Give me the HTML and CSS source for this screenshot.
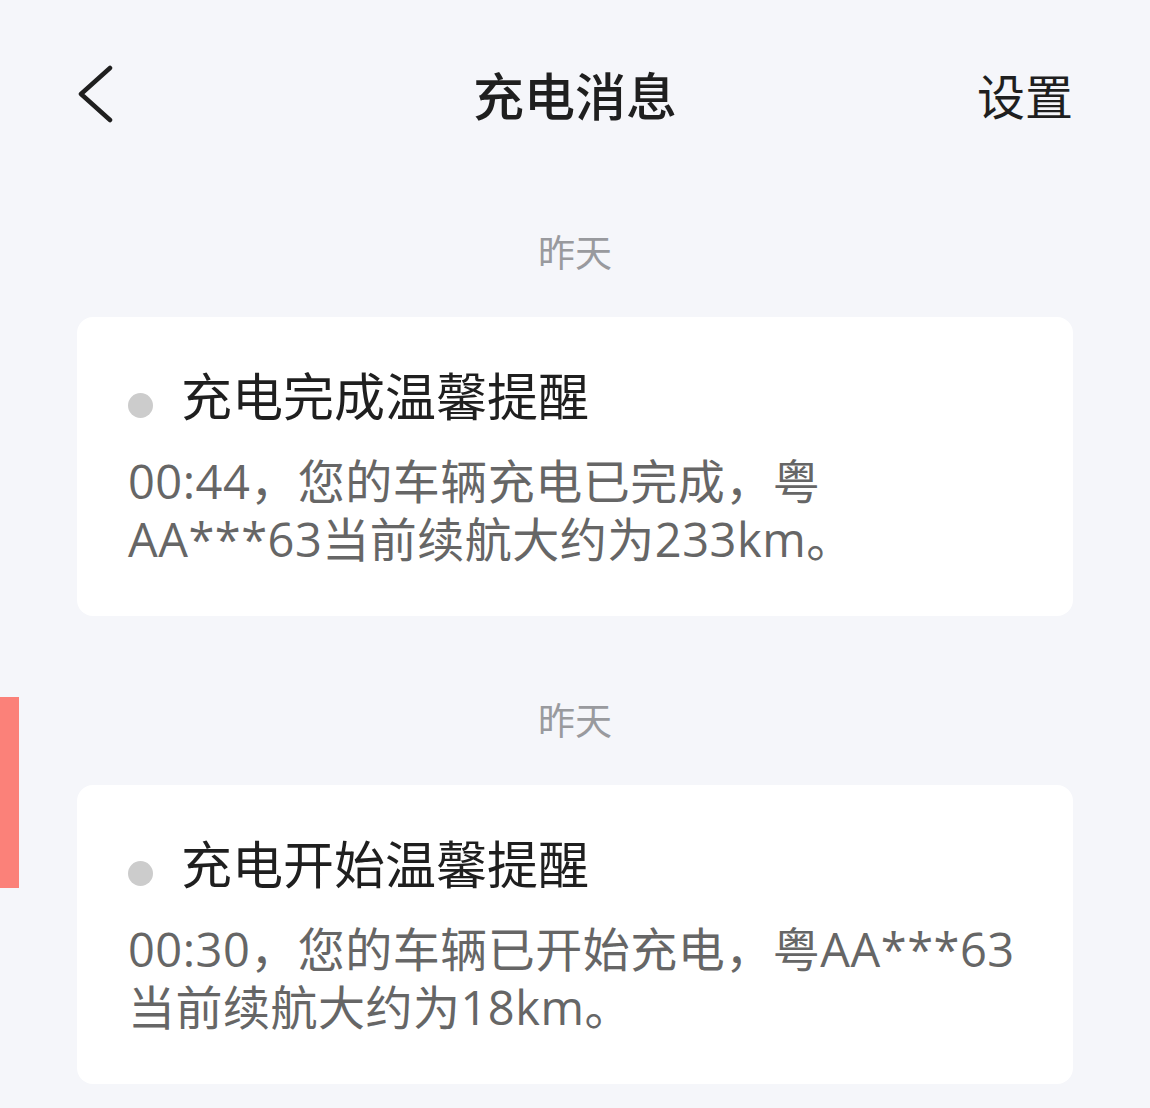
FILE: index.html
```html
<!DOCTYPE html>
<html lang="zh-CN">
<head>
<meta charset="utf-8">
<title>充电消息</title>
<link rel="stylesheet" href="styles.css">
</head>
<body>
<div class="page">
  <header class="topbar">
    <button class="back" aria-label="返回">
      <svg width="40" height="58" viewBox="0 0 40 58"><polyline points="34,3 5,29 34,55" fill="none" stroke="#1f1f1f" stroke-width="4.5" stroke-linecap="round" stroke-linejoin="round"/></svg>
    </button>
    <h1 class="title">充电消息</h1>
    <span class="settings">设置</span>
  </header>
  <main class="list">
    <section class="group">
      <div class="date">昨天</div>
      <article class="card">
        <div class="card-head"><span class="dot"></span><h2 class="card-title">充电完成温馨提醒</h2></div>
        <p class="card-body">00:44，您的车辆充电已完成，粤<br>AA***63当前续航大约为233km。</p>
      </article>
    </section>
    <section class="group">
      <div class="date">昨天</div>
      <article class="card">
        <div class="card-head"><span class="dot"></span><h2 class="card-title">充电开始温馨提醒</h2></div>
        <p class="card-body">00:30，您的车辆已开始充电，粤AA***63当前续航大约为18km。</p>
      </article>
    </section>
  </main>
  <div class="edge-tab"></div>
</div>
</body>
</html>
```
FILE: styles.css
```css
html, body {
  margin: 0;
  padding: 0;
  background: #f5f6fa;
}
body {
  font-family: "Noto Sans CJK SC", "Noto Sans", sans-serif;
  color: #1f1f1f;
}
.page {
  position: relative;
  width: 1150px;
  height: 1108px;
  overflow: hidden;
}
.topbar {
  height: 188px;
  display: flex;
  align-items: center;
  justify-content: space-between;
  padding: 0 77px 0 76px;
  box-sizing: border-box;
  position: relative;
}
.back {
  background: none;
  border: 0;
  padding: 0;
  width: 40px;
  height: 58px;
  display: flex;
  cursor: pointer;
}
.title {
  position: absolute;
  left: 0;
  right: 0;
  margin: 0;
  text-align: center;
  font-size: 51px;
  font-weight: 500;
  line-height: 60px;
  color: #1f1f1f;
  pointer-events: none;
}
.settings {
  font-size: 48px;
  line-height: 60px;
  color: #1f1f1f;
}
.list {
  display: flex;
  flex-direction: column;
  gap: 80px;
  padding: 40px 77px 0 77px;
}
.group {
  display: flex;
  flex-direction: column;
}
.date {
  text-align: center;
  font-size: 37px;
  line-height: 46px;
  color: #999a9e;
  margin-bottom: 43px;
}
.card {
  background: #ffffff;
  border-radius: 16px;
  padding: 47px 51px 47px 51px;
  height: 299px;
  box-sizing: border-box;
}
.card-head {
  display: flex;
  align-items: center;
}
.dot {
  width: 25px;
  height: 25px;
  border-radius: 50%;
  background: #cccccc;
  margin-right: 28px;
  margin-top: 22px;
  flex: none;
}
.card-title {
  margin: 0;
  font-size: 51px;
  font-weight: 400;
  line-height: 60px;
  color: #1f1f1f;
}
.card-body {
  margin: 28px 0 0 0;
  font-family: "Open Sans", "Noto Sans CJK SC", sans-serif;
  font-size: 47px;
  line-height: 58px;
  letter-spacing: 0.5px;
  color: #666666;
}
.edge-tab {
  position: absolute;
  left: 0;
  top: 697px;
  width: 19px;
  height: 191px;
  background: #fb8179;
}
```
